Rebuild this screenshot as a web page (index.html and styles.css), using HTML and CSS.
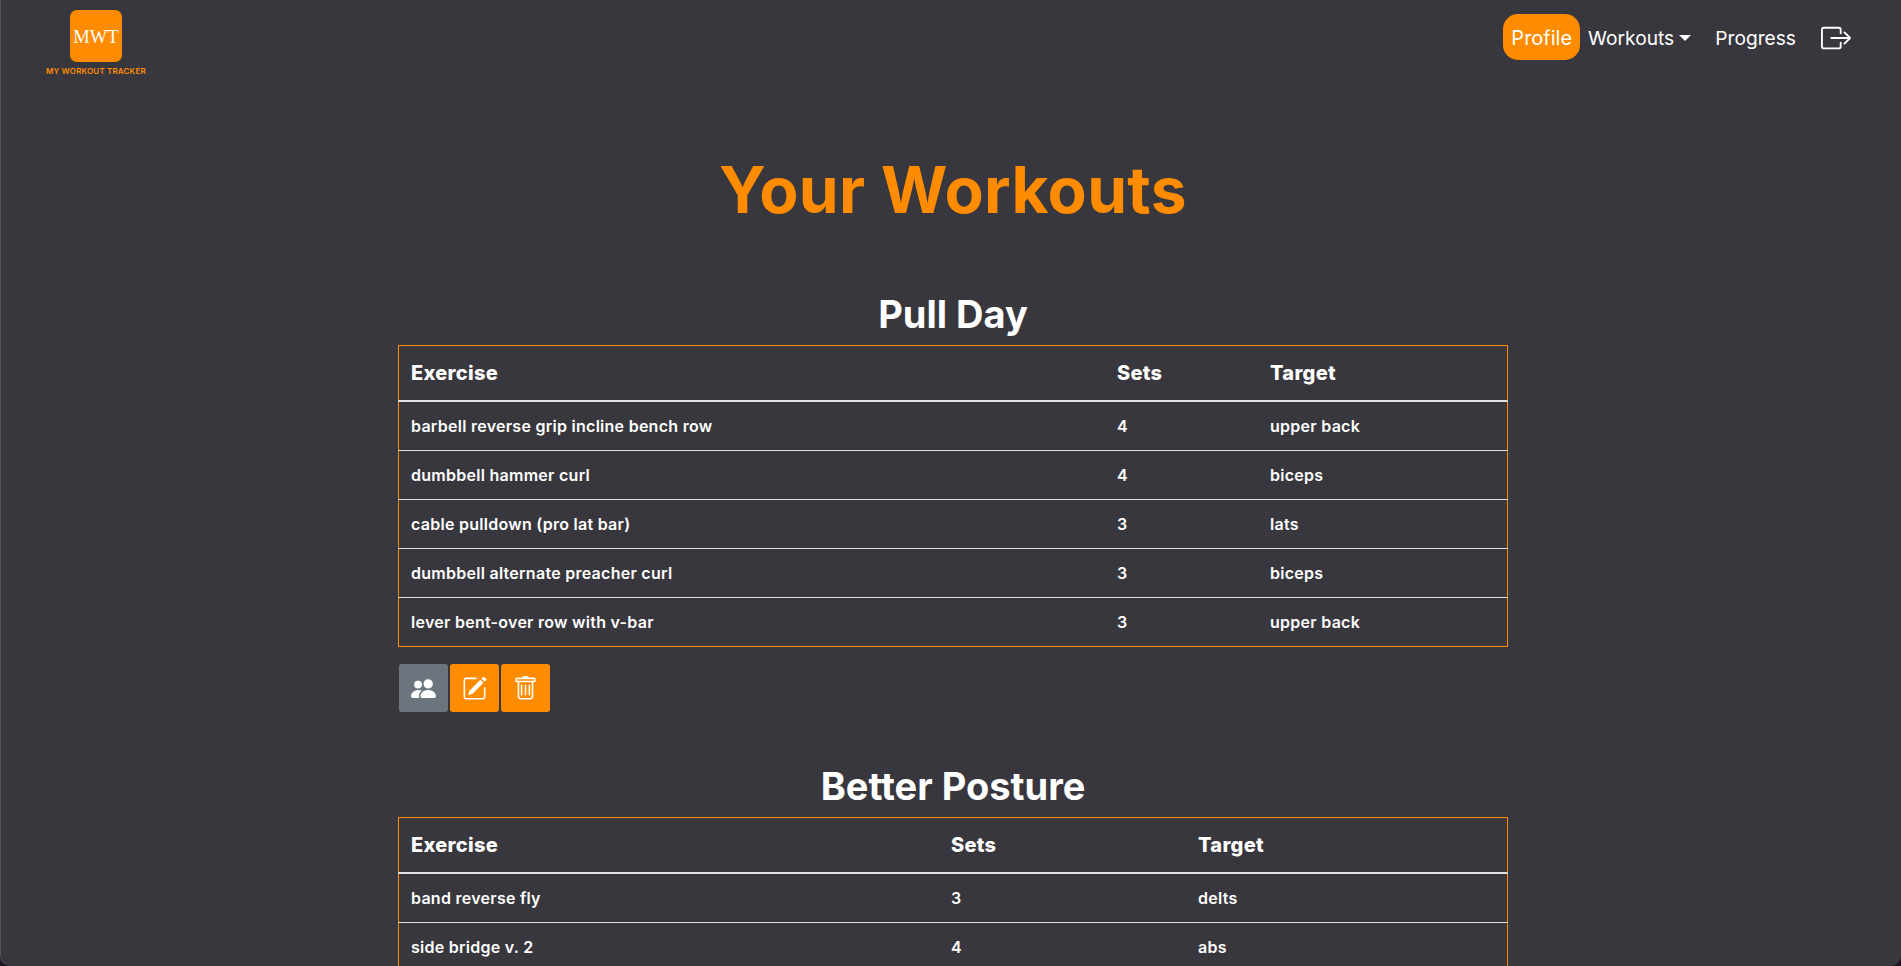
FILE: index.html
```html
<!doctype html>
<html lang="en-US">
  <head>
    <meta charset="utf-8" />
    <title>My Workout Tracker - Your Workouts</title>
    <link rel="stylesheet" href="styles.css">
  </head>
  <body>
    <div class="frame">
      <nav class="navbar">
        <a class="brand" href="#">
          <span class="brand-logo">MWT</span>
          <span class="brand-name">MY WORKOUT TRACKER</span>
        </a>
        <div class="nav-links">
          <a class="nav-link active" href="#">Profile</a>
          <a class="nav-link" href="#">Workouts<span class="caret"></span></a>
          <a class="nav-link nav-progress" href="#">Progress</a>
          <a class="nav-link nav-icon" href="#">
            <svg class="logout" viewBox="0 0 16 16" fill="currentColor">
              <path fill-rule="evenodd" d="M10 12.5a.5.5 0 0 1-.5.5h-8a.5.5 0 0 1-.5-.5v-9a.5.5 0 0 1 .5-.5h8a.5.5 0 0 1 .5.5v2a.5.5 0 0 0 1 0v-2A1.5 1.5 0 0 0 9.500 2h-8A1.500 1.500 0 0 0 0 3.500v9A1.500 1.500 0 0 0 1.500 14h8a1.500 1.500 0 0 0 1.500-1.500v-2a.5.5 0 0 0-1 0v2z"/>
              <path fill-rule="evenodd" d="M15.854 8.354a.5.5 0 0 0 0-.708l-3-3a.5.5 0 0 0-.708.708L14.293 7.500H5.500a.5.5 0 0 0 0 1h8.793l-2.147 2.146a.5.5 0 0 0 .708.708l3-3z"/>
            </svg>
          </a>
        </div>
      </nav>

      <main class="content">
        <h1 class="page-title">Your Workouts</h1>

        <section class="workout">
          <h2 class="workout-name">Pull Day</h2>
          <table class="workout-table">
            <thead>
              <tr><th class="col-exercise-a">Exercise</th><th class="col-sets-a">Sets</th><th>Target</th></tr>
            </thead>
            <tbody>
              <tr><td>barbell reverse grip incline bench row</td><td>4</td><td>upper back</td></tr>
              <tr><td>dumbbell hammer curl</td><td>4</td><td>biceps</td></tr>
              <tr><td>cable pulldown (pro lat bar)</td><td>3</td><td>lats</td></tr>
              <tr><td>dumbbell alternate preacher curl</td><td>3</td><td>biceps</td></tr>
              <tr><td>lever bent-over row with v-bar</td><td>3</td><td>upper back</td></tr>
            </tbody>
          </table>
          <div class="actions">
            <button class="btn btn-grey">
              <svg viewBox="0 0 16 16" fill="currentColor"><path d="M7 14s-1 0-1-1 1-4 5-4 5 3 5 4-1 1-1 1H7zm4-6a3 3 0 1 0 0-6 3 3 0 0 0 0 6z"/><path fill-rule="evenodd" d="M5.216 14A2.238 2.238 0 0 1 5 13c0-1.355.68-2.750 1.936-3.720A6.325 6.325 0 0 0 5 9c-4 0-5 3-5 4s1 1 1 1h4.216z"/><path d="M4.500 8a2.500 2.500 0 1 0 0-5 2.500 2.500 0 0 0 0 5z"/></svg>
            </button>
            <button class="btn btn-orange">
              <svg viewBox="0 0 16 16" fill="currentColor"><path d="M15.502 1.940a.5.5 0 0 1 0 .706L14.459 3.690l-2-2L13.502.646a.5.5 0 0 1 .707 0l1.293 1.293zm-1.750 2.456-2-2L4.939 9.210a.5.5 0 0 0-.121.196l-.805 2.414a.25.25 0 0 0 .316.316l2.414-.805a.5.5 0 0 0 .196-.120l6.813-6.814z"/><path fill-rule="evenodd" d="M1 13.500A1.500 1.500 0 0 0 2.500 15h11a1.500 1.500 0 0 0 1.500-1.500v-6a.5.5 0 0 0-1 0v6a.5.5 0 0 1-.5.5h-11a.5.5 0 0 1-.5-.5v-11a.5.5 0 0 1 .5-.5H9a.5.5 0 0 0 0-1H2.500A1.500 1.500 0 0 0 1 2.500v11z"/></svg>
            </button>
            <button class="btn btn-orange">
              <svg viewBox="0 0 16 16" fill="currentColor"><path d="M5.500 5.500A.5.5 0 0 1 6 6v6a.5.5 0 0 1-1 0V6a.5.5 0 0 1 .5-.5zm2.500 0a.5.5 0 0 1 .5.5v6a.5.5 0 0 1-1 0V6a.5.5 0 0 1 .5-.5zm3 .5a.5.5 0 0 0-1 0v6a.5.5 0 0 0 1 0V6z"/><path fill-rule="evenodd" d="M14.500 3a1 1 0 0 1-1 1H13v9a2 2 0 0 1-2 2H5a2 2 0 0 1-2-2V4h-.5a1 1 0 0 1-1-1V2a1 1 0 0 1 1-1H6a1 1 0 0 1 1-1h2a1 1 0 0 1 1 1h3.500a1 1 0 0 1 1 1v1zM4.118 4 4 4.059V13a1 1 0 0 0 1 1h6a1 1 0 0 0 1-1V4.059L11.882 4H4.118zM2.500 3V2h11v1h-11z"/></svg>
            </button>
          </div>
        </section>

        <section class="workout">
          <h2 class="workout-name">Better Posture</h2>
          <table class="workout-table">
            <thead>
              <tr><th class="col-exercise-b">Exercise</th><th class="col-sets-b">Sets</th><th>Target</th></tr>
            </thead>
            <tbody>
              <tr><td>band reverse fly</td><td>3</td><td>delts</td></tr>
              <tr><td>side bridge v. 2</td><td>4</td><td>abs</td></tr>
            </tbody>
          </table>
        </section>
      </main>
    </div>
  </body>
</html>
```

FILE: styles.css
```css
html,
body
{
    margin: 0;
    height: 100%;
    overflow: hidden;
    background: #1d1420;
}

.frame
{
    height: 966px;
    box-sizing: border-box;
    overflow: hidden;
    background: #38373d;
    border-left: 1px solid #55545b;
    border-radius: 0 0 10px 10px;
    color: #fff;
    font-family: Inter, "Liberation Sans", sans-serif;
}

.navbar
{
    display: flex;
    justify-content: space-between;
    align-items: flex-start;
    padding: 10px 42px 0 45px;
}

.brand
{
    display: flex;
    flex-direction: column;
    align-items: center;
    color: #ff8c00;
    text-decoration: none;
}

.brand-logo
{
    width: 52px;
    height: 52px;
    padding-top: 2px;
    box-sizing: border-box;
    display: flex;
    align-items: center;
    justify-content: center;
    background: #ff8c00;
    border-radius: 7px;
    color: #fff;
    font-family: "Liberation Serif", serif;
    font-size: 18.5px;
}

.brand-name
{
    margin-top: 4px;
    font-size: 8px;
    font-weight: 600;
    letter-spacing: 0.17px;
    white-space: nowrap;
}

.nav-links
{
    display: flex;
    align-items: center;
    margin-top: 4px;
}

.nav-link
{
    display: block;
    padding: 9px 8px 7px;
    color: #fff;
    font-size: 19.2px;
    line-height: 30px;
    text-decoration: none;
}

.nav-link.active
{
    background: #ff8c00;
    border-radius: 15px;
    font-size: 20px;
}

.caret
{
    display: inline-block;
    margin-left: 5px;
    vertical-align: 4px;
    border-top: 6px solid #fff;
    border-left: 6px solid transparent;
    border-right: 6px solid transparent;
}

.nav-progress
{
    margin-left: 8px;
}

.nav-icon
{
    margin-left: 9px;
}

.logout
{
    display: block;
    width: 30px;
    height: 30px;
}

.content
{
    width: 1110px;
    margin: 0 auto;
    padding-left: 4px;
}

.page-title
{
    margin: 76px 0 0;
    color: #ff8c00;
    font-size: 64px;
    font-weight: 700;
    letter-spacing: 0.35px;
    line-height: 1.2;
    text-align: center;
}

.workout
{
    margin-top: 63px;
}

.workout + .workout
{
    margin-top: 52px;
}

.workout-name
{
    margin: 0 0 8px;
    font-size: 38px;
    font-weight: 700;
    line-height: 1.2;
    text-align: center;
}

.workout + .workout .workout-name
{
    margin-bottom: 7px;
}

.workout-table
{
    width: 100%;
    table-layout: fixed;
    border-collapse: collapse;
    border: 1px solid #ff8c00;
    font-size: 16px;
}

.workout-table th
{
    padding: 12px;
    border-bottom: 2px solid #dee2e6;
    font-size: 20px;
    font-weight: 800;
    letter-spacing: 0.3px;
    line-height: 30px;
    text-align: left;
}

.workout-table td
{
    padding: 12px;
    border-top: 1px solid #dee2e6;
    font-weight: 600;
    letter-spacing: 0.27px;
    line-height: 24px;
}

.col-exercise-a { width: 682px; }
.col-sets-a { width: 129px; }
.col-exercise-b { width: 516px; }
.col-sets-b { width: 223px; }

.actions
{
    display: flex;
    gap: 2px;
    margin: 17px 0 0 1px;
}

.btn
{
    display: flex;
    align-items: center;
    justify-content: center;
    width: 49px;
    height: 48px;
    padding: 0;
    border: 0;
    border-radius: 3px;
    color: #fff;
}

.btn svg
{
    width: 25px;
    height: 25px;
}

.btn-grey
{
    background: #6c757d;
}

.btn-orange
{
    background: #ff8c00;
}
```
